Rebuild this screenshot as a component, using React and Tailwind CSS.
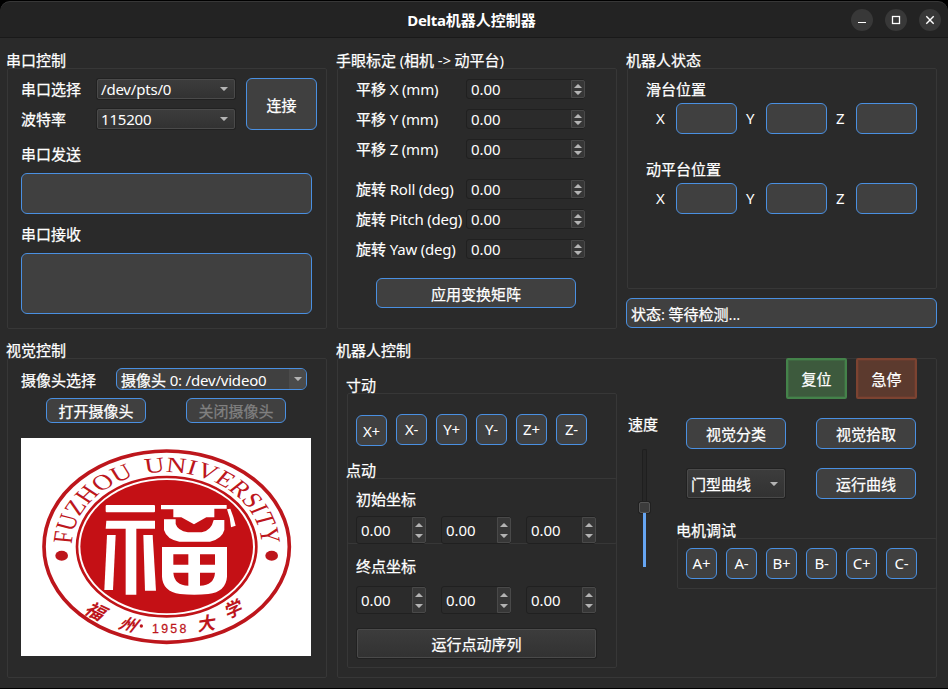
import React from "react";

const BLUE_BOX = "border border-[#4a90e2] bg-[#404040] rounded-[6px]";
const RAISED =
  "border border-[#4a4a4a] bg-gradient-to-b from-[#3c3c3c] to-[#323232] rounded-[2px] shadow-[0_0_0_1px_#212121]";

// Chinese runs are drawn slightly heavier than the Latin ones beside them.
function T({ children }) {
  const runs = String(children).match(/[\u4e00-\u9fff]+|[^\u4e00-\u9fff]+/g) || [];
  return (
    <span className="whitespace-pre">
      {runs.map((run, i) =>
        /[\u4e00-\u9fff]/.test(run) ? (
          <span key={i} className="[-webkit-text-stroke:0.25px_currentColor]">{run}</span>
        ) : (
          <span key={i} className="tracking-[-0.2px]">{run}</span>
        )
      )}
    </span>
  );
}

function Title({ children, className = "" }) {
  return (
    <div className={`h-[18px] leading-[20px] ${className}`}>
      <T>{children}</T>
    </div>
  );
}

function Group({ title, className = "", boxClass = "", children }) {
  return (
    <section className={className}>
      <Title className="-ml-px">{title}</Title>
      <div className={`border border-[#373737] rounded-[2px] ${boxClass}`}>{children}</div>
    </section>
  );
}

function Btn({ children, className = "" }) {
  return (
    <button className={`flex shrink-0 items-center justify-center ${BLUE_BOX} ${className}`}>
      <T>{children}</T>
    </button>
  );
}

function Arrow({ up = false }) {
  return (
    <svg width="8" height="4" viewBox="0 0 8 4" className="block">
      <path d={up ? "M0 4L3.6 0.2H4.4L8 4Z" : "M0 0L3.6 3.8H4.4L8 0Z"} fill="#b4b4b4" />
    </svg>
  );
}

function Combo({ children, className = "" }) {
  return (
    <div className={`flex shrink-0 items-center justify-between pl-[3px] pr-[6px] ${RAISED} ${className}`}>
      <span className="leading-[18px]">
        <T>{children}</T>
      </span>
      <Arrow />
    </div>
  );
}

function Spin({ className = "", gap = "gap-[3px]" }) {
  return (
    <div className={`flex shrink-0 rounded-[3px] border border-[#202020] bg-[#2b2b2b] ${className}`}>
      <div className="flex flex-1 items-center pl-1 tracking-[-0.1px]">0.00</div>
      <div
        className={`-mr-px flex w-[14px] flex-col items-center justify-center rounded-r-[2px] border border-[#494949] bg-[#373737] ${gap}`}
      >
        <Arrow up />
        <Arrow />
      </div>
    </div>
  );
}

function SerialPanel() {
  return (
    <Group title="串口控制" boxClass="h-[261px] w-[320px] pl-[13px] pt-[9px]">
      <div className="flex">
        <div className="flex w-[76px] flex-col pt-px">
          <div className="h-[30px] leading-[20px]"><T>串口选择</T></div>
          <div className="h-[20px] leading-[20px]"><T>波特率</T></div>
        </div>
        <div className="flex flex-col gap-[10px] pt-px">
          <Combo className="h-[20px] w-[138px]">/dev/pts/0</Combo>
          <Combo className="h-[20px] w-[138px]">115200</Combo>
        </div>
        <Btn className="ml-[11px] h-[52px] w-[71px] pt-px">连接</Btn>
      </div>
      <div className="mt-[14px] h-[20px] leading-[20px]"><T>串口发送</T></div>
      <div className={`mt-[9px] h-[41px] w-[291px] ${BLUE_BOX}`} />
      <div className="mt-[10px] h-[20px] leading-[20px]"><T>串口接收</T></div>
      <div className={`mt-[9px] h-[61px] w-[291px] ${BLUE_BOX}`} />
    </Group>
  );
}

function CalibRow({ label }) {
  return (
    <div className="flex h-[20px] items-center">
      <div className="w-[110px] whitespace-nowrap leading-[20px]"><T>{label}</T></div>
      <Spin className="h-[20px] w-[119px]" gap="gap-[3px]" />
    </div>
  );
}

function CalibPanel() {
  return (
    <Group title="手眼标定 (相机 -> 动平台)" boxClass="h-[261px] w-[280px] pl-[18px] pt-[10px]">
      <div className="flex flex-col gap-[10px]">
        {["平移 X (mm)", "平移 Y (mm)", "平移 Z (mm)"].map((l) => (
          <CalibRow key={l} label={l} />
        ))}
      </div>
      <div className="mt-[20px] flex flex-col gap-[10px]">
        {["旋转 Roll (deg)", "旋转 Pitch (deg)", "旋转 Yaw (deg)"].map((l) => (
          <CalibRow key={l} label={l} />
        ))}
      </div>
      <Btn className="ml-[20px] mt-[19px] h-[30px] w-[200px] pt-px">应用变换矩阵</Btn>
    </Group>
  );
}

function AxisRow() {
  return (
    <div className="flex items-center pl-[10px]">
      {["X", "Y", "Z"].map((a) => (
        <div key={a} className="flex w-[90px] items-center">
          <span className="w-[20px] pb-[2px]">{a}</span>
          <div className={`h-[31px] w-[61px] ${BLUE_BOX}`} />
        </div>
      ))}
    </div>
  );
}

function StatusPanel() {
  return (
    <div>
      <Group title="机器人状态" boxClass="h-[221px] w-[310px] pl-[18px] pt-[10px]">
        <div className="mb-[4px] h-[20px] leading-[20px]"><T>滑台位置</T></div>
        <AxisRow />
        <div className="mb-[4px] mt-[25px] h-[20px] leading-[20px]"><T>动平台位置</T></div>
        <AxisRow />
      </Group>
      <div className={`-ml-px mt-[9px] flex h-[30px] w-[311px] items-center pl-[4px] pt-px ${BLUE_BOX}`}>
        <T>状态: 等待检测...</T>
      </div>
    </div>
  );
}

function Seal() {
  return (
    <svg width="290" height="218" viewBox="33 24 870 654" preserveAspectRatio="none" className="block bg-white">
      <defs>
        <path id="arc" d="M-285 0A285 285 0 0 1 285 0" />
      </defs>
      <ellipse cx="470" cy="350" rx="368" ry="287" fill="none" stroke="#bd161c" strokeWidth="11" />
      <ellipse cx="470" cy="350" rx="269" ry="209" fill="none" stroke="#c01318" strokeWidth="8" />
      <ellipse cx="470" cy="350" rx="259" ry="200" fill="#c41015" />
      <ellipse cx="155" cy="377" rx="19" ry="15" fill="#bd161c" />
      <ellipse cx="785" cy="377" rx="19" ry="15" fill="#bd161c" />
      <g transform="translate(470 350) scale(1 .785)">
        <text
          fontFamily="'Liberation Serif', serif"
          fontSize="83"
          fontWeight="400"
          fill="#bd161c"
          wordSpacing="14"
        >
          <textPath href="#arc" startOffset="10" textLength="875" lengthAdjust="spacingAndGlyphs">
            FUZHOU UNIVERSITY
          </textPath>
        </text>
      </g>
      <g fill="#fff">
        <rect x="287" y="225" width="148" height="22" rx="3" />
        <path d="M289 272H435V296H379V494H347V296H287Z" />
        <path d="M291 315H317L309 480H283Z" />
        <path d="M400 315H428L438 482H405Z" />
        <path d="M453 225H650V236H613V262H589L552 283L514 262H490V238H453Z" />
        <path d="M651 238L661 236Q672 262 677 287L663 292Q661 262 651 238Z" />
        <path d="M462 268H497V282Q503 302 534 307H575Q604 302 611 270H643V300Q636 327 600 335H508Q470 328 462 300Z" />
        <path
          fillRule="evenodd"
          d="M456 351H651V440Q648 485 595 492Q553 497 510 492Q458 484 456 440Z M490 373H535V404H490Z M570 373H615V404H570Z M490 428H535V467Q493 466 490 428Z M570 428H615Q612 466 570 467Z"
        />
      </g>
      <g fill="#bd161c" fontFamily="'Noto Sans CJK SC', sans-serif" fontWeight="700" textAnchor="middle">
        <text transform="translate(244 560) rotate(26) skewX(-20)" fontSize="56">福</text>
        <text transform="translate(346 600) rotate(14) skewX(-24)" fontSize="50">州</text>
        <text transform="translate(590 600) rotate(-8) skewX(-12)" fontSize="54">大</text>
        <text transform="translate(676 557) rotate(-24) skewX(-12)" fontSize="54">学</text>
      </g>
      <circle cx="394" cy="588" r="5" fill="#bd161c" />
      <text
        x="426"
        y="609"
        fontFamily="'Liberation Sans', sans-serif"
        fontSize="37"
        fill="#bd161c"
        stroke="#bd161c"
        strokeWidth="0.8"
        textLength="103"
        lengthAdjust="spacing"
      >
        1958
      </text>
    </svg>
  );
}

function VisionPanel() {
  return (
    <Group title="视觉控制" boxClass="h-[320px] w-[320px] pl-[13px] pt-[9px]">
      <div className="flex items-center">
        <div className="w-[95px] pt-[2px] leading-[20px]"><T>摄像头选择</T></div>
        <div className={`flex h-[22px] w-[191px] items-stretch overflow-hidden ${BLUE_BOX}`}>
          <div className="flex-1 pl-[4px] pt-px leading-[20px]"><T>摄像头 0: /dev/video0</T></div>
          <div className="flex w-[17px] items-center justify-center bg-[#4b4b4b]">
            <Arrow />
          </div>
        </div>
      </div>
      <div className="mt-[8px] flex gap-[40px] pl-[25px]">
        <Btn className="h-[25px] w-[100px]">打开摄像头</Btn>
        <Btn className="h-[25px] w-[100px] text-[#808080]">关闭摄像头</Btn>
      </div>
      <div className="mt-[15px] w-[290px]">
        <Seal />
      </div>
    </Group>
  );
}

function SpinRow() {
  return (
    <div className="flex gap-[15px]">
      <Spin className="h-[28px] w-[70px]" gap="gap-[7px]" />
      <Spin className="h-[28px] w-[70px]" gap="gap-[7px]" />
      <Spin className="h-[28px] w-[70px]" gap="gap-[7px]" />
    </div>
  );
}

function MotionColumn() {
  return (
    <div className="w-[270px] pt-[16px]">
      <Group title="寸动" boxClass="mb-[-84px] h-[151px] w-[270px] pl-[8px] pt-[20px]">
        <div className="flex gap-[9px]">
          <Btn className="mt-px h-[31px] w-[31px]">X+</Btn>
          {["X-", "Y+", "Y-", "Z+", "Z-"].map((b) => (
            <Btn key={b} className="h-[31px] w-[31px] pb-px">{b}</Btn>
          ))}
        </div>
      </Group>
      <Group title="点动" boxClass="h-[190px] w-[270px] pl-[8px] pt-[10px]">
        <div className="mb-[7px] h-[20px] leading-[20px]"><T>初始坐标</T></div>
        <SpinRow />
        <div className="mb-[10px] mt-[12px] h-[20px] leading-[20px]"><T>终点坐标</T></div>
        <SpinRow />
        <button className={`ml-px mt-[15px] flex h-[29px] w-[239px] items-center justify-center ${RAISED}`}>
          <T>运行点动序列</T>
        </button>
      </Group>
    </div>
  );
}

function Slider() {
  return (
    <div className="flex w-[11px] flex-col items-center">
      <div className="h-[53px] w-[5px] rounded-t-[2px] border border-b-0 border-[#1f1f1f] bg-[#272727]" />
      <div className="h-[11px] w-[11px] rounded-[2px] border border-[#555] bg-[#3b3b3b] shadow-[0_0_0_1px_#202020]" />
      <div className="h-[54px] w-[3px] bg-[#66a5f2]" />
    </div>
  );
}

function ActionColumn() {
  return (
    <div className="-mt-px flex w-[320px]">
      <div className="w-[59px] pl-[11px] pt-[56px]">
        <div className="mb-[15px] h-[20px] leading-[20px]"><T>速度</T></div>
        <div className="pl-[11px]">
          <Slider />
        </div>
      </div>
      <div className="w-[261px]">
        <div className="flex gap-[9px] pl-[110px]">
          <button className="flex h-[41px] w-[61px] items-center justify-center rounded-[2px] border-2 border-[#44824a] bg-[#3d5a3d] pt-px shadow-[inset_0_0_0_1px_#3f6841]">
            <T>复位</T>
          </button>
          <button className="flex h-[41px] w-[61px] items-center justify-center rounded-[2px] border-2 border-[#7c4331] bg-[#5c3a2e] pt-px shadow-[inset_0_0_0_1px_#663b2e]">
            <T>急停</T>
          </button>
        </div>
        <div className="mt-[19px] flex gap-[30px] pl-[10px]">
          <Btn className="h-[31px] w-[100px]">视觉分类</Btn>
          <Btn className="h-[31px] w-[100px]">视觉拾取</Btn>
        </div>
        <div className="mt-[19px] flex items-center gap-[31px] pl-[11px]">
          <Combo className="h-[29px] w-[98px]">门型曲线</Combo>
          <Btn className="h-[31px] w-[100px]">运行曲线</Btn>
        </div>
        <Group title="电机调试" className="mt-[21px] ml-px" boxClass="h-[51px] w-[260px] pl-[8px] pt-[9px]">
          <div className="flex gap-[9px]">
            {["A+", "A-", "B+", "B-", "C+", "C-"].map((b) => (
              <Btn key={b} className="h-[31px] w-[31px] pb-px">{b}</Btn>
            ))}
          </div>
        </Group>
      </div>
    </div>
  );
}

function WindowButton({ children }) {
  return (
    <button className="flex h-[22px] w-[22px] items-center justify-center rounded-full bg-[#383838]">
      <svg width="22" height="22" viewBox="0 0 22 22" fill="none" stroke="#fff">
        {children}
      </svg>
    </button>
  );
}

export default function App() {
  return (
    <div className="h-[689px] w-[948px] overflow-hidden bg-black pb-px pt-px font-['Noto_Sans','Noto_Sans_CJK_SC',sans-serif] text-[15px] font-normal leading-[20px] text-white">
      <div className="flex h-[687px] flex-col overflow-hidden rounded-t-[10px] bg-[#2a2a2a]">
        <header className="grid h-[37px] shrink-0 grid-cols-[100px_1fr_100px] items-center rounded-t-[10px] border-b border-t border-b-[#191919] border-t-[#373737] bg-[#232323]">
          <span />
          <h1 className="pr-[5px] text-center font-bold">
            <span className="tracking-[-0.3px]">Delta</span>机器人控制器
          </h1>
          <div className="flex gap-[12px] pl-[3px]">
            <WindowButton>
              <path d="M7 13.5H15" />
            </WindowButton>
            <WindowButton>
              <rect x="7.5" y="7.5" width="7" height="7" strokeWidth="1.3" />
            </WindowButton>
            <WindowButton>
              <path d="M7.3 7.3L14.7 14.7M14.7 7.3L7.3 14.7" strokeWidth="1.4" />
            </WindowButton>
          </div>
        </header>
        <main className="flex flex-col gap-[11px] pl-[7px] pt-[12px]">
          <div className="flex h-[279px] gap-[10px]">
            <SerialPanel />
            <CalibPanel />
            <StatusPanel />
          </div>
          <div className="flex gap-[10px]">
            <VisionPanel />
            <Group title="机器人控制" boxClass="flex h-[320px] w-[600px] pl-[9px]">
              <MotionColumn />
              <ActionColumn />
            </Group>
          </div>
        </main>
      </div>
    </div>
  );
}
